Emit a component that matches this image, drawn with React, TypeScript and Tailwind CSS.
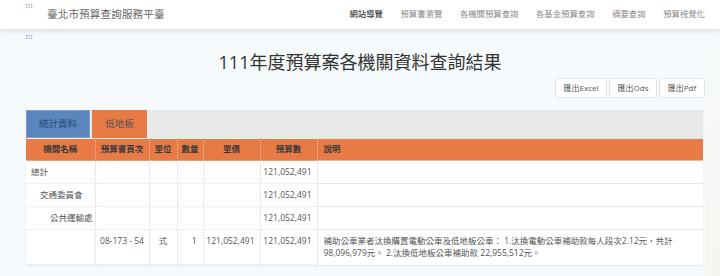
import React from "react";

const Dots = () => (
  <svg width="7" height="5" viewBox="0 0 7 5" className="block">
    {[0, 1, 2].map((c) =>
      [0, 1].map((r) => (
        <rect key={`${c}-${r}`} x={c * 2.5} y={r * 2.5} width="1.3" height="1.3" fill="#8fa3c8" />
      ))
    )}
  </svg>
);

const navs = ["網站導覽", "預算書瀏覽", "各機關預算查詢", "各基金預算查詢", "摘要查詢", "預算視覺化"];

const rows = [
  { name: "總計", pad: "pl-[5px]", page: "", unit: "", qty: "", price: "", amt: "121,052,491", desc: "" },
  { name: "交通委員會", pad: "pl-[14px]", page: "", unit: "", qty: "", price: "", amt: "121,052,491", desc: "" },
  { name: "公共運輸處", pad: "pl-[24px]", page: "", unit: "", qty: "", price: "", amt: "121,052,491", desc: "" },
  {
    name: "",
    pad: "pl-[5px]",
    page: "08-173 - 54",
    unit: "式",
    qty: "1",
    price: "121,052,491",
    amt: "121,052,491",
    desc: "補助公車業者汰換購置電動公車及低地板公車： 1.汰換電動公車補助款每人段次2.12元，共計98,096,979元。 2.汰換低地板公車補助款 22,955,512元。",
  },
];

export default function App() {
  const font = { fontFamily: '"Open Sans", "Noto Sans CJK TC", sans-serif' };
  return (
    <div className="w-[720px] h-[276px] overflow-hidden relative bg-[#f6fafc]" style={font}>
      {/* faint decorations */}
      <div className="absolute left-[705px] top-[30px] w-[20px] h-[246px] bg-gradient-to-b from-[#f6fafc] to-[#f6f6f0]" />

      {/* header */}
      <div className="relative z-10 h-[29px] bg-white shadow-[0_2px_5px_rgba(0,0,0,0.12)] flex items-center">
        <div className="absolute left-[26px] top-[4px]">
          <Dots />
        </div>
        <div className="pl-[47px] text-[10.5px] text-[#666] tracking-[0.2px]">臺北市預算查詢服務平臺</div>
        <div className="ml-auto flex items-center gap-[17.5px] pr-[15px] text-[8.4px] text-[#8a8a8a]">
          {navs.map((n, i) => (
            <span key={n} className={i === 0 ? "text-[#444] font-medium" : ""}>
              {n}
            </span>
          ))}
        </div>
      </div>

      <div className="absolute left-[26px] top-[35px]">
        <Dots />
      </div>

      {/* title */}
      <div className="relative pt-[21px] text-center text-[18px] leading-[24px] text-[#333]">
        111年度預算案各機關資料查詢結果
      </div>

      {/* buttons */}
      <div className="relative flex justify-end gap-[2px] pr-[15px] mt-[4px]">
        {["匯出Excel", "匯出Ods", "匯出Pdf"].map((b, i) => (
          <div
            key={b}
            className={`h-[20px] ${i === 0 ? "w-[52px]" : i === 1 ? "w-[48px]" : "w-[46px]"} bg-white border border-[#e2e2e2] rounded-[3px] flex items-center justify-center text-[8px] text-[#555]`}
          >
            {b}
          </div>
        ))}
      </div>

      {/* table block */}
      <div className="relative ml-[26px] w-[677px] mt-[12px] bg-white rounded-b-[3px] shadow-[0_1px_2px_rgba(0,0,0,0.08)]">
        <div className="h-[28px] bg-[#e8e8e8] flex items-stretch">
          <div className="w-[64px] bg-[#5b86bb] flex items-center justify-center text-[9.5px] text-[#2b4a72] border border-[#7ea2cf]">
            統計資料
          </div>
          <div className="ml-[2px] w-[55px] bg-[#e87a45] flex items-center justify-center text-[9.5px] text-[#555]">
            低地板
          </div>
        </div>
        <table className="w-full table-fixed border-collapse text-[8.5px] text-[#555]">
          <colgroup>
            <col className="w-[69px]" />
            <col className="w-[54px]" />
            <col className="w-[28px]" />
            <col className="w-[26px]" />
            <col className="w-[57px]" />
            <col className="w-[57px]" />
            <col />
          </colgroup>
          <thead>
            <tr className="bg-[#e87a45] text-[#3a3a3a] font-bold">
              {["機關名稱", "預算書頁次", "單位", "數量", "單價", "預算數"].map((h) => (
                <th
                  key={h}
                  className="h-[22px] p-0 text-center font-bold border-r border-dotted border-r-[#f3c2a8] border-t border-t-[#e0e0e0] border-b border-b-[#e8b89e]"
                >
                  {h}
                </th>
              ))}
              <th className="h-[22px] p-0 pl-[6px] text-left font-bold border-t border-t-[#e0e0e0] border-b border-b-[#e8b89e]">
                說明
              </th>
            </tr>
          </thead>
          <tbody>
            {rows.map((r, i) => (
              <tr key={i}>
                <td className={`${r.pad} py-[5px] leading-[12px] align-top border-b border-b-[#e6e6e6] border-r border-dotted border-r-[#d8d8d8] whitespace-nowrap`}>
                  {r.name}
                </td>
                <td className="py-[5px] leading-[12px] align-top text-center border-b border-b-[#e6e6e6] border-r border-dotted border-r-[#d8d8d8] whitespace-nowrap">
                  {r.page}
                </td>
                <td className="py-[5px] leading-[12px] align-top text-center border-b border-b-[#e6e6e6] border-r border-dotted border-r-[#d8d8d8]">
                  {r.unit}
                </td>
                <td className="py-[5px] pr-[6px] leading-[12px] align-top text-right border-b border-b-[#e6e6e6] border-r border-dotted border-r-[#d8d8d8]">
                  {r.qty}
                </td>
                <td className="py-[5px] pr-[5px] leading-[12px] align-top text-right border-b border-b-[#e6e6e6] border-r border-dotted border-r-[#d8d8d8] whitespace-nowrap">
                  {r.price}
                </td>
                <td className="py-[5px] pr-[5px] leading-[12px] align-top text-right border-b border-b-[#e6e6e6] border-r border-dotted border-r-[#d8d8d8] whitespace-nowrap">
                  {r.amt}
                </td>
                <td className={`py-[5px] pl-[6px] pr-[8px] leading-[12px] align-top text-left ${i === rows.length - 1 ? "" : "border-b border-b-[#e6e6e6]"}`}>
                  {r.desc}
                </td>
              </tr>
            ))}
          </tbody>
        </table>
      </div>
    </div>
  );
}
